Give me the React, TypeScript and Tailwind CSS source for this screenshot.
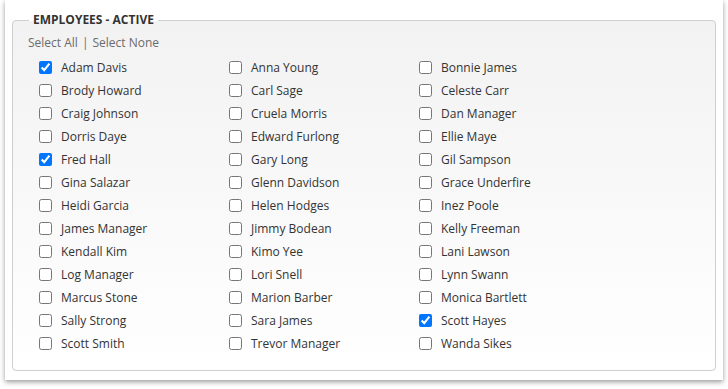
import React from "react";

const EMPLOYEES: { name: string; checked?: boolean }[] = [
  { name: "Adam Davis", checked: true },
  { name: "Anna Young" },
  { name: "Bonnie James" },
  { name: "Brody Howard" },
  { name: "Carl Sage" },
  { name: "Celeste Carr" },
  { name: "Craig Johnson" },
  { name: "Cruela Morris" },
  { name: "Dan Manager" },
  { name: "Dorris Daye" },
  { name: "Edward Furlong" },
  { name: "Ellie Maye" },
  { name: "Fred Hall", checked: true },
  { name: "Gary Long" },
  { name: "Gil Sampson" },
  { name: "Gina Salazar" },
  { name: "Glenn Davidson" },
  { name: "Grace Underfire" },
  { name: "Heidi Garcia" },
  { name: "Helen Hodges" },
  { name: "Inez Poole" },
  { name: "James Manager" },
  { name: "Jimmy Bodean" },
  { name: "Kelly Freeman" },
  { name: "Kendall Kim" },
  { name: "Kimo Yee" },
  { name: "Lani Lawson" },
  { name: "Log Manager" },
  { name: "Lori Snell" },
  { name: "Lynn Swann" },
  { name: "Marcus Stone" },
  { name: "Marion Barber" },
  { name: "Monica Bartlett" },
  { name: "Sally Strong" },
  { name: "Sara James" },
  { name: "Scott Hayes", checked: true },
  { name: "Scott Smith" },
  { name: "Trevor Manager" },
  { name: "Wanda Sikes" },
];

export default function App() {
  return (
    <div className="min-h-screen bg-white font-['Open_Sans',sans-serif]">
      <div className="ml-[5px] w-[718px] h-[380px] bg-white shadow-[0_2px_5px_rgba(0,0,0,0.4)] pt-[12px]">
        {/* Employees fieldset */}
        <fieldset className="ml-[7px] w-[704px] h-[359px] border border-[#cfcfcf] rounded-[4px] bg-gradient-to-b from-[#f2f2f2] to-white pl-[15px] pr-2 pb-[14px]">
          <legend className="ml-[1px] px-1 text-[12px] leading-[16px] font-bold text-[#333]">
            EMPLOYEES - ACTIVE
          </legend>
          <div className="pt-[7px] text-[12px] leading-[16px] text-[#6b6b6b]">
            <span>Select All</span>
            <span className="mx-1">|</span>
            <span>Select None</span>
          </div>
          <div className="mt-[5px] pl-[11px] grid grid-cols-[190px_190px_190px]">
            {EMPLOYEES.map((e) => (
              <label key={e.name} className="h-[23px] flex items-center gap-[9px] text-[12px] text-[#333]">
                <input type="checkbox" defaultChecked={e.checked} className="m-0 w-[13px] h-[13px]" />
                <span>{e.name}</span>
              </label>
            ))}
          </div>
        </fieldset>
      </div>
    </div>
  );
}
